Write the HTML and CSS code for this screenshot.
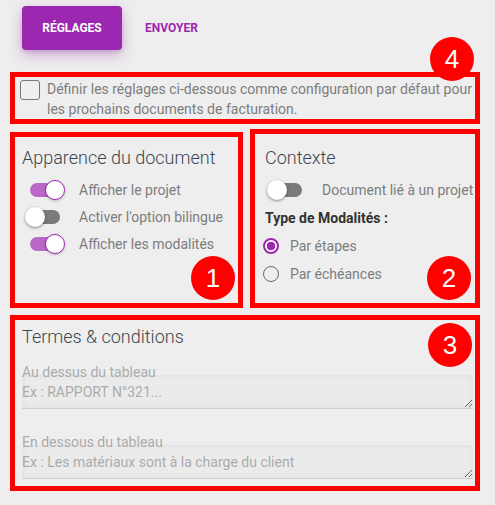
FILE: index.html
```html
<!DOCTYPE html>
<html lang="fr">
<head>
<meta charset="utf-8">
<title>Réglages</title>
<link rel="stylesheet" href="styles.css">
</head>
<body>
<div class="page">
  <div class="tabs">
    <button class="tab tab-active">Réglages</button>
    <button class="tab">Envoyer</button>
  </div>

  <div class="frame frame-default">
    <label class="default-row">
      <span class="checkbox"></span>
      <span class="default-text">Définir les réglages ci-dessous comme configuration par défaut pour les prochains documents de facturation.</span>
    </label>
    <span class="badge badge-4">4</span>
  </div>

  <div class="grid">
    <div class="frame frame-appearance">
      <h3 class="title">Apparence du document</h3>
      <div class="toggle-row">
        <span class="switch on"><span class="track"></span><span class="thumb"></span></span>
        <span class="opt">Afficher le projet</span>
      </div>
      <div class="toggle-row">
        <span class="switch"><span class="track"></span><span class="thumb"></span></span>
        <span class="opt">Activer l'option bilingue</span>
      </div>
      <div class="toggle-row">
        <span class="switch on"><span class="track"></span><span class="thumb"></span></span>
        <span class="opt">Afficher les modalités</span>
      </div>
      <span class="badge badge-1">1</span>
    </div>

    <div class="frame frame-context">
      <h3 class="title">Contexte</h3>
      <div class="toggle-row">
        <span class="switch"><span class="track"></span><span class="thumb"></span></span>
        <span class="opt">Document lié à un projet</span>
      </div>
      <div class="subtitle">Type de Modalités :</div>
      <div class="radio-row">
        <span class="radio checked"></span>
        <span class="opt">Par étapes</span>
      </div>
      <div class="radio-row">
        <span class="radio"></span>
        <span class="opt">Par échéances</span>
      </div>
      <span class="badge badge-2">2</span>
    </div>
  </div>

  <div class="frame frame-terms">
    <h3 class="title">Termes &amp; conditions</h3>
    <div class="field">
      <label class="field-label">Au dessus du tableau</label>
      <textarea class="field-input" placeholder="Ex : RAPPORT N°321..."></textarea>
    </div>
    <div class="field field-second">
      <label class="field-label">En dessous du tableau</label>
      <textarea class="field-input" placeholder="Ex : Les matériaux sont à la charge du client"></textarea>
    </div>
    <span class="badge badge-3">3</span>
  </div>
</div>
</body>
</html>
```

FILE: styles.css
```css
* { box-sizing: border-box; }

html, body {
  margin: 0;
  padding: 0;
  background: #eeeeee;
  font-family: Roboto, "Liberation Sans", sans-serif;
  color: #7d7d7d;
}

.page {
  width: 495px;
  height: 505px;
  padding: 6px 15px 0 10px;
  overflow: hidden;
}

.tabs {
  display: flex;
  align-items: center;
  padding-left: 12px;
  height: 44px;
}

.tab {
  font-family: Roboto, "Liberation Sans", sans-serif;
  font-size: 12px;
  font-weight: 700;
  text-transform: uppercase;
  border: none;
  background: transparent;
  color: #9c27b0;
  padding: 0;
  height: 44px;
  cursor: pointer;
}

.tab-active {
  width: 100px;
  background: #9c27b0;
  color: #ffffff;
  border-radius: 4px;
  box-shadow: 0 5px 14px rgba(156, 39, 176, 0.35), 0 2px 4px rgba(0, 0, 0, 0.12);
  margin-right: 23px;
}

.frame {
  position: relative;
  border: 5px solid #ff0000;
}

.frame-default {
  margin-top: 22px;
  padding: 2px 0 0 5px;
  height: 52px;
}

.default-row {
  display: flex;
  align-items: flex-start;
  gap: 7px;
}

.checkbox {
  flex: none;
  width: 20px;
  height: 20px;
  margin-top: 1px;
  border: 1.5px solid #777;
  border-radius: 3px;
  background: #efefef;
}

.default-text {
  font-size: 14px;
  line-height: 20px;
  color: #7d7d7d;
}

.grid {
  display: grid;
  grid-template-columns: 233px 230px;
  column-gap: 7px;
  margin-top: 5px;
}

.frame-appearance {
  margin-top: 3px;
  height: 176px;
  padding: 10px 0 0 7px;
}

.frame-context {
  height: 179px;
  padding: 13px 0 0 10px;
}

.title {
  margin: 0 0 7px;
  font-size: 18px;
  line-height: 22px;
  font-weight: 300;
  color: #3c4650;
}

.toggle-row {
  display: flex;
  align-items: center;
  gap: 14px;
  height: 27px;
}

.frame-appearance .toggle-row { padding-left: 3px; }
.frame-context .toggle-row { padding-left: 2px; gap: 15px; }

.opt {
  font-size: 14px;
  line-height: 20px;
  color: #7d7d7d;
}

.switch {
  position: relative;
  flex: none;
  width: 40px;
  height: 20px;
}

.switch .track {
  position: absolute;
  left: 5px;
  right: 5px;
  top: 3px;
  height: 14px;
  border-radius: 7px;
  background: #7b7b7b;
}

.switch .thumb {
  position: absolute;
  left: 0;
  top: 0;
  width: 20px;
  height: 20px;
  border-radius: 50%;
  background: #ffffff;
  box-shadow: 0 1px 3px rgba(0, 0, 0, 0.45);
}

.switch.on .track { background: #ba68c8; }

.switch.on .thumb {
  left: 20px;
  border: 1px solid #9c27b0;
  box-shadow: 0 1px 3px rgba(0, 0, 0, 0.25);
}

.subtitle {
  margin-top: 5px;
  font-size: 14px;
  line-height: 20px;
  font-weight: 700;
  color: #333;
}

.radio-row {
  display: flex;
  align-items: center;
  gap: 11px;
  height: 28px;
}

.radio-row:first-of-type { margin-top: 4px; }

.subtitle + .radio-row { margin-top: 4px; }

.radio {
  flex: none;
  width: 16px;
  height: 16px;
  margin-left: -2px;
  border-radius: 50%;
  border: 1.5px solid #6a6a6a;
  background: transparent;
}

.radio.checked {
  border: 2px solid #9c27b0;
  background: radial-gradient(circle, #9c27b0 0 4px, #ffffff 4.6px);
}

.frame-terms {
  margin-top: 7px;
  height: 176px;
  padding: 6px 2px 0 7px;
}

.frame-terms .title { margin-bottom: 15px; }

.field-label {
  display: block;
  font-size: 14px;
  line-height: 18px;
  color: #ababab;
}

.field-input {
  display: block;
  width: 100%;
  height: 34px;
  margin-top: -6px;
  padding: 7px 0 0 0;
  border: none;
  border-bottom: 1px solid #cfcfcf;
  border-radius: 3px 3px 0 0;
  background: #ebebeb;
  box-shadow: inset 0 0 6px rgba(0, 0, 0, 0.06);
  font-family: Roboto, "Liberation Sans", sans-serif;
  font-size: 14px;
  line-height: 20px;
  color: #555;
  outline: none;
}

.field-input::placeholder { color: #ababab; }

.field-second { margin-top: 24px; }

.badge {
  position: absolute;
  width: 44px;
  height: 44px;
  border-radius: 50%;
  background: #ff0000;
  color: #ffffff;
  font-family: "Liberation Sans", Arial, sans-serif;
  font-size: 26px;
  line-height: 44px;
  text-align: center;
}

.badge-4 { right: 1px; top: -40px; }
.badge-1 { right: 3px; bottom: 3px; }
.badge-2 { right: 4px; bottom: 3px; }
.badge-3 { right: 3px; top: 3px; }
```
